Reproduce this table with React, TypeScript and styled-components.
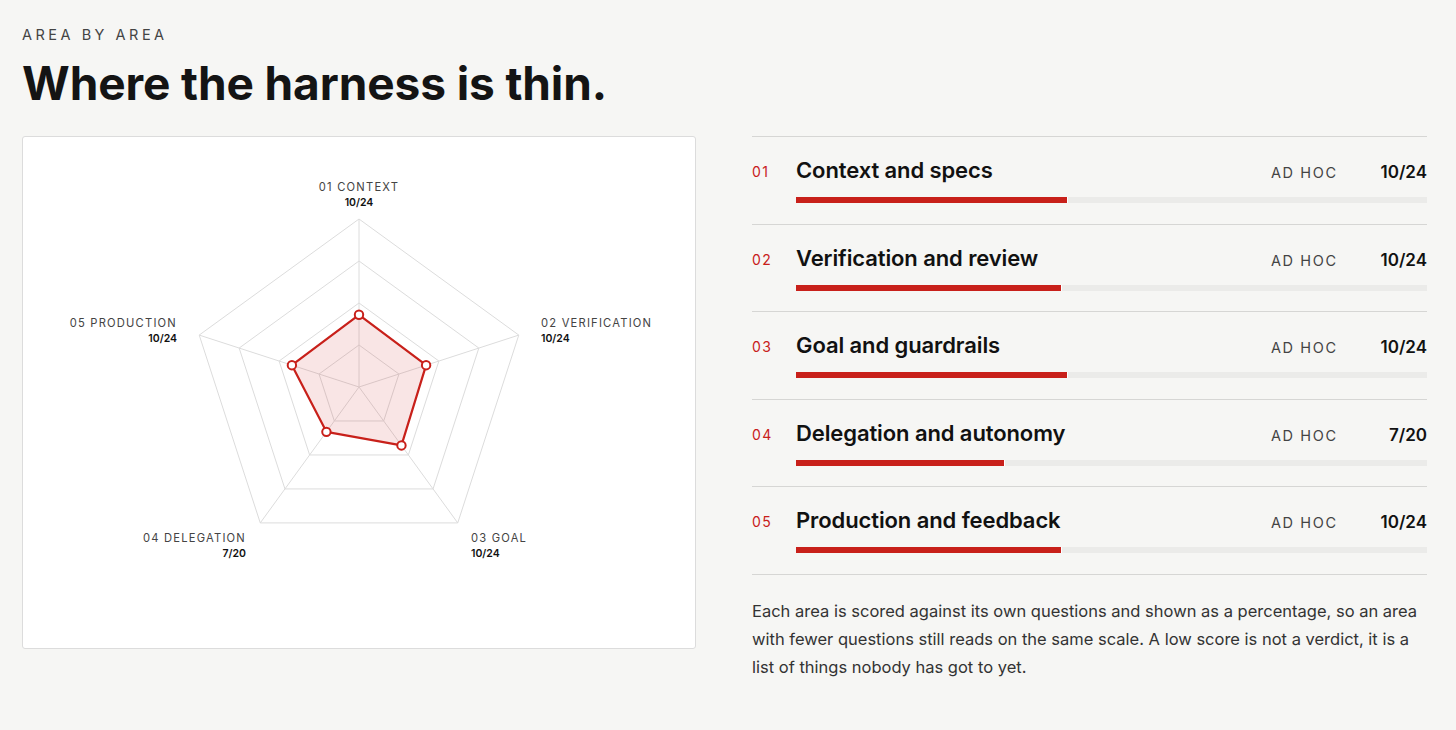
import React from "react";
import styled, { createGlobalStyle } from "styled-components";

const GlobalStyle = createGlobalStyle`
  html, body {
    margin: 0;
    padding: 0;
    background: #f6f6f4;
  }
  body {
    font-family: "Inter", "Liberation Sans", sans-serif;
    color: #111;
  }
`;

interface Area {
  num: string;
  short: string;
  title: string;
  level: string;
  score: string;
  fill: number;
}

const areas: Area[] = [
  { num: "01", short: "CONTEXT", title: "Context and specs", level: "AD HOC", score: "10/24", fill: 0.43 },
  { num: "02", short: "VERIFICATION", title: "Verification and review", level: "AD HOC", score: "10/24", fill: 0.42 },
  { num: "03", short: "GOAL", title: "Goal and guardrails", level: "AD HOC", score: "10/24", fill: 0.43 },
  { num: "04", short: "DELEGATION", title: "Delegation and autonomy", level: "AD HOC", score: "7/20", fill: 0.33 },
  { num: "05", short: "PRODUCTION", title: "Production and feedback", level: "AD HOC", score: "10/24", fill: 0.42 },
];

// radar geometry, in card pixels
const CX = 337;
const CY = 251;
const R = 168;

const vertex = (i: number, r: number) => {
  const a = (Math.PI * 2 * i) / 5;
  return [CX + r * Math.sin(a), CY - r * Math.cos(a)];
};

const ring = (f: number) =>
  [0, 1, 2, 3, 4].map((i) => vertex(i, R * f).join(",")).join(" ");

const Radar = () => {
  const pts = areas.map((a, i) => vertex(i, R * a.fill));
  const labelPos: { x: number; y: number; anchor: "start" | "middle" | "end" }[] = [
    { x: CX, y: 55, anchor: "middle" },
    { x: 519, y: 191, anchor: "start" },
    { x: 449, y: 406, anchor: "start" },
    { x: 224, y: 406, anchor: "end" },
    { x: 155, y: 191, anchor: "end" },
  ];
  return (
    <svg width="674" height="513" viewBox="0 0 674 513">
      {[1, 0.75, 0.5, 0.25].map((f) => (
        <polygon key={f} points={ring(f)} fill="none" stroke="#dcdcdc" strokeWidth="1" />
      ))}
      {[0, 1, 2, 3, 4].map((i) => {
        const [x, y] = vertex(i, R);
        return <line key={i} x1={CX} y1={CY} x2={x} y2={y} stroke="#dcdcdc" strokeWidth="1" />;
      })}
      <polygon
        points={pts.map((p) => p.join(",")).join(" ")}
        fill="rgba(205,40,40,0.12)"
        stroke="#c8201a"
        strokeWidth="2.2"
        strokeLinejoin="round"
      />
      {pts.map(([x, y], i) => (
        <circle key={i} cx={x} cy={y} r="4.2" fill="#fff" stroke="#c8201a" strokeWidth="2" />
      ))}
      {areas.map((a, i) => {
        const l = labelPos[i];
        return (
          <g key={a.num}>
            <ChartLabel x={l.x} y={l.y} textAnchor={l.anchor}>
              {a.num} {a.short}
            </ChartLabel>
            <ChartScore x={l.x} y={l.y + 15} textAnchor={l.anchor}>
              {a.score}
            </ChartScore>
          </g>
        );
      })}
    </svg>
  );
};

const App = () => {
  return (
    <Page>
      <GlobalStyle />
      <Eyebrow>AREA BY AREA</Eyebrow>
      <Heading>Where the harness is thin.</Heading>
      <Columns>
        <ChartCard>
          <Radar />
        </ChartCard>
        <Side>
          <List>
            {areas.map((a) => (
              <Row key={a.num}>
                <Num>{a.num}</Num>
                <RowBody>
                  <RowHead>
                    <Title>{a.title}</Title>
                    <Level>{a.level}</Level>
                    <Score>{a.score}</Score>
                  </RowHead>
                  <Track>
                    <Fill style={{ width: `${a.fill * 100}%` }} />
                  </Track>
                </RowBody>
              </Row>
            ))}
          </List>
          <Note>
            Each area is scored against its own questions and shown as a percentage, so an area
            with fewer questions still reads on the same scale. A low score is not a verdict, it is a
            list of things nobody has got to yet.
          </Note>
        </Side>
      </Columns>
    </Page>
  );
};

export default App;

const Page = styled.main`
  padding: 27px 29px 40px 22px;
`;

const Eyebrow = styled.div`
  font-size: 14.5px;
  letter-spacing: 3.5px;
  color: #444;
  line-height: 16px;
`;

const Heading = styled.h1`
  margin: 14px 0 0;
  font-size: 46px;
  font-weight: 700;
  letter-spacing: -0.1px;
  line-height: 52px;
  color: #141414;
`;

const Columns = styled.div`
  display: grid;
  grid-template-columns: 674px 1fr;
  gap: 56px;
  margin-top: 27px;
  align-items: start;
`;

const ChartCard = styled.div`
  background: #fff;
  border: 1px solid #dcdcdc;
  border-radius: 3px;
  height: 511px;
  overflow: hidden;
  svg {
    display: block;
    margin: -1px;
  }
`;

const ChartLabel = styled.text`
  font-family: "Inter", "Liberation Sans", sans-serif;
  font-size: 11.2px;
  letter-spacing: 1.2px;
  fill: #444;
`;

const ChartScore = styled.text`
  font-family: "Inter", "Liberation Sans", sans-serif;
  font-size: 10.5px;
  font-weight: 600;
  fill: #111;
`;

const Side = styled.div`
  display: flex;
  flex-direction: column;
`;

const List = styled.div`
  border-top: 1px solid #d6d6d4;
`;

const Row = styled.div`
  display: flex;
  height: 87.5px;
  border-bottom: 1px solid #d6d6d4;
  box-sizing: border-box;
  padding-top: 20px;
`;

const Num = styled.div`
  width: 44px;
  font-size: 14px;
  letter-spacing: 1.4px;
  color: #c8201a;
  padding-top: 6px;
`;

const RowBody = styled.div`
  flex: 1;
`;

const RowHead = styled.div`
  display: flex;
  align-items: baseline;
`;

const Title = styled.div`
  flex: 1;
  font-size: 22px;
  font-weight: 600;
  letter-spacing: -0.1px;
  color: #111;
  line-height: 26px;
`;

const Level = styled.div`
  font-size: 14.5px;
  letter-spacing: 1.6px;
  color: #444;
  width: 90px;
`;

const Score = styled.div`
  font-size: 17px;
  font-weight: 600;
  color: #111;
  width: 66px;
  text-align: right;
`;

const Track = styled.div`
  margin-top: 14px;
  height: 6px;
  background: #ebebe9;
`;

const Fill = styled.div`
  height: 100%;
  background: #c8201a;
  border-right: 1px solid #fff;
`;

const Note = styled.p`
  margin: 22px 0 0;
  font-size: 16.5px;
  line-height: 28px;
  color: #333;
`;
